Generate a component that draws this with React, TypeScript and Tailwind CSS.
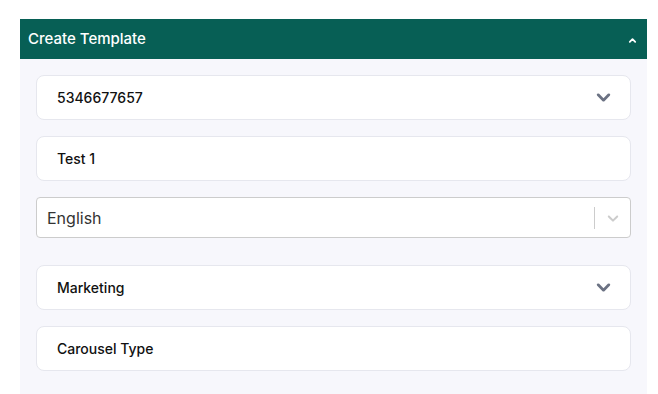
import React from 'react';

function Chevron({ className }: { className?: string }) {
  return (
    <svg viewBox="0 0 16 16" className={className} fill="none" stroke="currentColor" strokeWidth={2.6} strokeLinecap="round" strokeLinejoin="round">
      <path d="M3 5.5l5 5 5-5" />
    </svg>
  );
}

function Field({ label, dropdown }: { label: string; dropdown?: boolean }) {
  return (
    <div className="flex h-[45px] items-center justify-between rounded-lg border border-[#e6e7ee] bg-white pl-[20px] pr-[18px]">
      <span className="text-[14px] font-medium text-[#111]">{label}</span>
      {dropdown && <Chevron className="h-[17px] w-[17px] text-[#6b7283]" />}
    </div>
  );
}

export default function App() {
  return (
    <div className="min-h-[394px] bg-white pl-[20px] pr-[11px] pt-[19px]" style={{ fontFamily: 'Inter, "Noto Sans", sans-serif' }}>
      <div className="flex h-[40px] items-center justify-between bg-[#075f55] pl-[8px] pr-[10px]">
        <span className="text-[15px] font-medium text-white">Create Template</span>
        <svg viewBox="0 0 10 10" className="mt-[3px] h-[9px] w-[9px] text-white" fill="none" stroke="currentColor" strokeWidth={2} strokeLinecap="round" strokeLinejoin="round">
          <path d="M2 6.5l3-3 3 3" />
        </svg>
      </div>
      <div className="flex h-[335px] flex-col gap-[16px] bg-[#f7f7fc] pl-[16px] pr-[16px] pt-[16px]">
        <Field label="5346677657" dropdown />
        <Field label="Test 1" />
        <div className="mb-[11px] flex h-[41px] items-center rounded border border-[#cccccc] bg-white pl-[10px]">
          <span className="flex-1 text-[16px] text-[#333]">English</span>
          <span className="h-[22px] w-px bg-[#cccccc]" />
          <span className="flex w-[35px] justify-center">
            <svg viewBox="0 0 20 20" className="h-[18px] w-[18px] text-[#cccccc]" fill="currentColor">
              <path d="M4.516 7.548c.436-.446 1.043-.481 1.576 0L10 11.295l3.908-3.747c.533-.481 1.141-.446 1.574 0 .436.445.408 1.197 0 1.615-.406.418-4.695 4.502-4.695 4.502a1.095 1.095 0 01-1.576 0S4.924 9.581 4.516 9.163c-.409-.418-.436-1.170 0-1.615z" />
            </svg>
          </span>
        </div>
        <Field label="Marketing" dropdown />
        <Field label="Carousel Type" />
      </div>
    </div>
  );
}
